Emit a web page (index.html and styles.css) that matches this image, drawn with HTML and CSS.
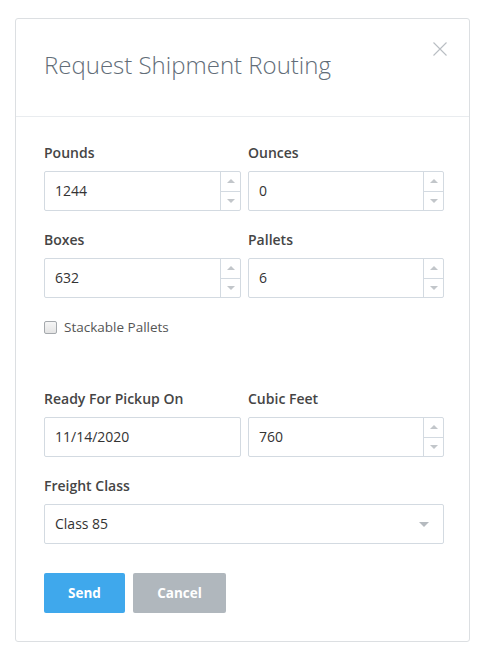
FILE: index.html
```html
<!DOCTYPE html>
<html>
<head>
<meta charset="utf-8">
<link rel="stylesheet" href="styles.css">
</head>
<body>
<div class="modal">
  <div class="modal-header">
    <h1 class="title">Request Shipment Routing</h1>
    <button class="close" aria-label="Close">
      <svg width="14" height="14" viewBox="0 0 14 14"><path d="M0.5 0.5 L13.5 13.5 M13.5 0.5 L0.5 13.5" stroke="#b9bec3" stroke-width="1.1" fill="none"/></svg>
    </button>
  </div>
  <div class="modal-body">
    <div class="row">
      <div class="group">
        <label class="label">Pounds</label>
        <div class="num"><input class="field" type="text" value="1244"><span class="spin"><span class="up"></span><span class="down"></span></span></div>
      </div>
      <div class="group">
        <label class="label">Ounces</label>
        <div class="num"><input class="field" type="text" value="0"><span class="spin"><span class="up"></span><span class="down"></span></span></div>
      </div>
    </div>
    <div class="row">
      <div class="group">
        <label class="label">Boxes</label>
        <div class="num"><input class="field" type="text" value="632"><span class="spin"><span class="up"></span><span class="down"></span></span></div>
      </div>
      <div class="group">
        <label class="label">Pallets</label>
        <div class="num"><input class="field" type="text" value="6"><span class="spin"><span class="up"></span><span class="down"></span></span></div>
      </div>
    </div>
    <div class="check-row">
      <span class="checkbox"></span>
      <span class="check-label">Stackable Pallets</span>
    </div>
    <div class="row">
      <div class="group">
        <label class="label">Ready For Pickup On</label>
        <div class="num"><input class="field" type="text" value="11/14/2020"></div>
      </div>
      <div class="group">
        <label class="label">Cubic Feet</label>
        <div class="num"><input class="field" type="text" value="760"><span class="spin"><span class="up"></span><span class="down"></span></span></div>
      </div>
    </div>
    <div class="group">
      <label class="label">Freight Class</label>
      <div class="num select"><span class="field sel-text">Class 85</span><span class="caret"></span></div>
    </div>
    <div class="actions">
      <button class="btn btn-send">Send</button>
      <button class="btn btn-cancel">Cancel</button>
    </div>
  </div>
</div>
</body>
</html>
```

FILE: styles.css
```css
html, body {
  margin: 0;
  padding: 0;
  background: #ffffff;
}
body {
  font-family: "Open Sans", "Liberation Sans", sans-serif;
  color: #333;
  padding: 18px 0 0 15px;
}
.modal {
  width: 453px;
  border: 1px solid #dcdfe2;
  border-radius: 3px;
  background: #fff;
}
.modal-header {
  position: relative;
  padding: 30px 28px 35px 28px;
  border-bottom: 1px solid #e9ecef;
}
.title {
  margin: 0;
  font-size: 24px;
  font-weight: 300;
  line-height: 32px;
  color: #626d78;
}
.close {
  position: absolute;
  top: 23px;
  right: 22px;
  width: 14px;
  height: 14px;
  padding: 0;
  border: 0;
  background: none;
  display: block;
}
.close svg { display: block; }
.modal-body {
  padding: 27px 25px 28px 28px;
}
.row {
  display: grid;
  grid-template-columns: 197px 196px;
  column-gap: 7px;
}
.group {
  margin-bottom: 20px;
}
.label {
  display: block;
  font-size: 14px;
  font-weight: 600;
  line-height: 18px;
  color: #454545;
  margin-bottom: 9px;
}
.num {
  display: flex;
  height: 40px;
  box-sizing: border-box;
  border: 1px solid #d3dae1;
  border-radius: 2px;
  background: #fff;
}
.field {
  flex: 1;
  min-width: 0;
  border: 0;
  outline: none;
  background: transparent;
  padding: 0 10px;
  font-family: inherit;
  font-size: 14px;
  color: #333;
  height: 38px;
  line-height: 38px;
}
.spin {
  width: 19px;
  border-left: 1px solid #d3dae1;
  display: flex;
  flex-direction: column;
}
.spin .up, .spin .down {
  flex: 1;
  display: flex;
  align-items: center;
  justify-content: center;
}
.spin .up { border-bottom: 1px solid #d3dae1; }
.spin .up::before {
  content: "";
  border-left: 4px solid transparent;
  border-right: 4px solid transparent;
  border-bottom: 4px solid #c2c6ca;
}
.spin .down::before {
  content: "";
  border-left: 4px solid transparent;
  border-right: 4px solid transparent;
  border-top: 4px solid #c2c6ca;
}
.check-row {
  display: flex;
  align-items: center;
  height: 18px;
  margin-bottom: 54px;
}
.checkbox {
  width: 13px;
  height: 13px;
  box-sizing: border-box;
  border: 1px solid #a5a9ad;
  border-radius: 2px;
  background: linear-gradient(#f6f6f6, #e4e4e4);
  margin-right: 7px;
}
.check-label {
  font-size: 13.5px;
  color: #555;
  line-height: 18px;
}
.select {
  align-items: center;
}
.sel-text {
  display: block;
}
.caret {
  width: 0;
  height: 0;
  border-left: 5px solid transparent;
  border-right: 5px solid transparent;
  border-top: 5px solid #b5babf;
  margin-right: 14px;
}
.actions {
  display: flex;
  gap: 8px;
  margin-top: 29px;
}
.btn {
  height: 40px;
  border: 0;
  border-radius: 2px;
  font-family: inherit;
  font-size: 13.5px;
  font-weight: 700;
  color: #fff;
  padding: 0;
}
.btn-send {
  width: 81px;
  background: #3fa8ec;
}
.btn-cancel {
  width: 93px;
  background: #b0b7bd;
}
```
